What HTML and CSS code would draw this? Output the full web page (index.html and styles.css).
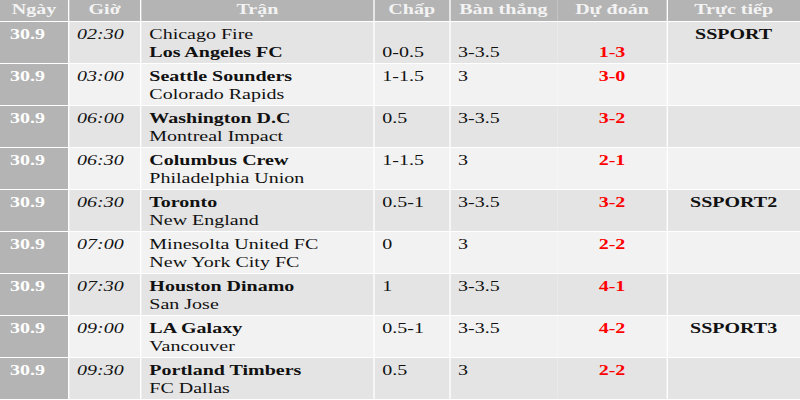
FILE: index.html
```html
<!DOCTYPE html>
<html lang="vi">
<head>
<meta charset="utf-8">
<title>Lịch thi đấu</title>
<link rel="stylesheet" href="styles.css">
</head>
<body>
<div class="table">
  <div class="row head">
    <div class="cell">Ngày</div><div class="cell">Giờ</div><div class="cell">Trận</div><div class="cell">Chấp</div><div class="cell">Bàn thắng</div><div class="cell">Dự đoán</div><div class="cell">Trực tiếp</div>
  </div>
  <div class="row dark">
    <div class="cell date">30.9</div><div class="cell time">02:30</div><div class="cell match">Chicago Fire<br><b>Los Angeles FC</b></div><div class="cell low">0-0.5</div><div class="cell low">3-3.5</div><div class="cell pred low">1-3</div><div class="cell tv">SSPORT</div>
  </div>
  <div class="row light">
    <div class="cell date">30.9</div><div class="cell time">03:00</div><div class="cell match"><b>Seattle Sounders</b><br>Colorado Rapids</div><div class="cell">1-1.5</div><div class="cell">3</div><div class="cell pred">3-0</div><div class="cell tv"></div>
  </div>
  <div class="row dark">
    <div class="cell date">30.9</div><div class="cell time">06:00</div><div class="cell match"><b>Washington D.C</b><br>Montreal Impact</div><div class="cell">0.5</div><div class="cell">3-3.5</div><div class="cell pred">3-2</div><div class="cell tv"></div>
  </div>
  <div class="row light">
    <div class="cell date">30.9</div><div class="cell time">06:30</div><div class="cell match"><b>Columbus Crew</b><br>Philadelphia Union</div><div class="cell">1-1.5</div><div class="cell">3</div><div class="cell pred">2-1</div><div class="cell tv"></div>
  </div>
  <div class="row dark">
    <div class="cell date">30.9</div><div class="cell time">06:30</div><div class="cell match"><b>Toronto</b><br>New England</div><div class="cell">0.5-1</div><div class="cell">3-3.5</div><div class="cell pred">3-2</div><div class="cell tv">SSPORT2</div>
  </div>
  <div class="row light">
    <div class="cell date">30.9</div><div class="cell time">07:00</div><div class="cell match">Minesolta United FC<br>New York City FC</div><div class="cell">0</div><div class="cell">3</div><div class="cell pred">2-2</div><div class="cell tv"></div>
  </div>
  <div class="row dark">
    <div class="cell date">30.9</div><div class="cell time">07:30</div><div class="cell match"><b>Houston Dinamo</b><br>San Jose</div><div class="cell">1</div><div class="cell">3-3.5</div><div class="cell pred">4-1</div><div class="cell tv"></div>
  </div>
  <div class="row light">
    <div class="cell date">30.9</div><div class="cell time">09:00</div><div class="cell match"><b>LA Galaxy</b><br>Vancouver</div><div class="cell">0.5-1</div><div class="cell">3-3.5</div><div class="cell pred">4-2</div><div class="cell tv">SSPORT3</div>
  </div>
  <div class="row dark">
    <div class="cell date">30.9</div><div class="cell time">09:30</div><div class="cell match"><b>Portland Timbers</b><br>FC Dallas</div><div class="cell">0.5</div><div class="cell">3</div><div class="cell pred">2-2</div><div class="cell tv"></div>
  </div>
</div>
</body>
</html>
```

FILE: styles.css
```css
html, body {
  margin: 0;
  padding: 0;
  background: #ffffff;
}
body {
  width: 800px;
  height: 400px;
  overflow: hidden;
  font-family: "Liberation Serif", "Times New Roman", serif;
  font-size: 15px;
  color: #111111;
}
.table {
  width: 600px;
  display: flex;
  flex-direction: column;
  gap: 1px;
  background: #ffffff;
  transform: scaleX(1.33333);
  transform-origin: 0 0;
}
.row {
  display: grid;
  grid-template-columns: 51px 53.5px 174px 56px 80px 81.5px 99.5px;
  column-gap: 0.75px;
  height: 41px;
}
.cell {
  padding: 3px 6px 0 6px;
  line-height: 18px;
  white-space: nowrap;
}
.row.head {
  height: 21px;
}
.row.head .cell {
  background: #b4b4b4;
  color: #f3f3f3;
  font-weight: bold;
  text-align: center;
  padding: 0;
  line-height: 19px;
}
.row.dark .cell {
  background: #e4e4e4;
}
.row.light .cell {
  background: #f2f2f2;
}
.row .cell.date {
  background: #b4b4b4;
  color: #ffffff;
  font-weight: bold;
  padding-left: 7.5px;
}
.cell.time {
  font-style: italic;
}
.cell.match b {
  font-weight: bold;
}
.cell.pred {
  color: #ff0000;
  font-weight: bold;
  text-align: center;
}
.cell.tv {
  font-weight: bold;
  text-align: center;
}
.cell.low {
  padding-top: 21px;
}
```
